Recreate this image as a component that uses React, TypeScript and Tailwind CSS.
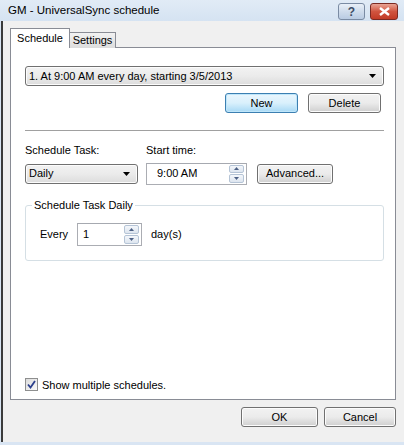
import React from "react";

// Win7-style "schedule" dialog with tab control, combo boxes and spin edits

const font = { fontFamily: '"Liberation Sans", Arial, sans-serif' };

function Button({ label, primary, className = "" }: { label: string; primary?: boolean; className?: string }) {
  return (
    <div
      className={`flex items-center justify-center rounded-[3px] border text-[11px] text-black ${
        primary
          ? "border-[#3c7fb1] bg-gradient-to-b from-[#eaf6fd] via-[#d9f0fc] to-[#a7d9f5] shadow-[inset_0_0_0_1px_#bfe6fa]"
          : "border-[#707070] bg-gradient-to-b from-[#f2f2f2] via-[#ebebeb] to-[#cfcfcf] shadow-[inset_0_0_0_1px_#fcfcfc]"
      } ${className}`}
    >
      {label}
    </div>
  );
}

function Combo({ value, className = "" }: { value: string; className?: string }) {
  return (
    <div
      className={`flex items-center justify-between rounded-[3px] border border-[#707070] bg-gradient-to-b from-[#f2f2f2] via-[#ebebeb] to-[#dcdcdc] pl-[3px] pr-[7px] text-[11px] text-black shadow-[inset_0_0_0_1px_#fcfcfc] ${className}`}
    >
      <span>{value}</span>
      <svg width="7" height="4" viewBox="0 0 7 4">
        <path d="M0 0h7L3.5 4z" fill="#000" />
      </svg>
    </div>
  );
}

function Spinner() {
  return (
    <div className="flex h-full w-[15px] flex-col gap-[1px] py-[1px]">
      {[0, 1].map((i) => (
        <div
          key={i}
          className="flex flex-1 items-center justify-center rounded-[2px] border border-[#b5c4d6] bg-gradient-to-b from-[#f4f7fb] to-[#dde5ef]"
        >
          <svg width="5" height="3" viewBox="0 0 5 3">
            <path d={i === 0 ? "M0 3h5L2.5 0z" : "M0 0h5L2.5 3z"} fill="#4d6185" />
          </svg>
        </div>
      ))}
    </div>
  );
}

function SpinEdit({ value, className = "", textPad = "pl-[10px]" }: { value: string; className?: string; textPad?: string }) {
  return (
    <div
      className={`flex items-center justify-between border border-[#abadb3] border-t-[#a6a9b0] bg-white pr-[2px] text-[11px] text-black ${className}`}
    >
      <span className={textPad}>{value}</span>
      <Spinner />
    </div>
  );
}

export default function App() {
  return (
    <div className="flex h-[445px] w-[404px] flex-col bg-[#d9e5f3]" style={font}>
      {/* title bar */}
      <div className="flex h-[21px] shrink-0 items-center justify-between bg-gradient-to-b from-[#e1ebf6] to-[#d5e3f2] pl-[8px] pr-[6px]">
        <span className="text-[11.5px] text-black">GM - UniversalSync schedule</span>
        <div className="mt-[2px] flex gap-[5px]">
          <div className="flex h-[17px] w-[27px] items-center justify-center rounded-[3px] border border-[#7a8ba3] bg-gradient-to-b from-[#e9f0f8] via-[#cfdcec] to-[#b9cbe2] text-[12px] font-bold text-[#3e4e66]">
            ?
          </div>
          <div className="flex h-[17px] w-[28px] items-center justify-center rounded-[3px] border border-[#7b2a22] bg-gradient-to-b from-[#e8a394] via-[#d0543f] to-[#c23b26]">
            <svg width="11" height="9" viewBox="0 0 11 9">
              <path d="M1 1l9 7M10 1L1 8" stroke="#fff" strokeWidth="2.4" />
            </svg>
          </div>
        </div>
      </div>

      {/* dialog client area */}
      <div className="ml-[1px] mb-[3px] flex flex-1 flex-col border-l-2 border-[#3b3b3b] bg-[#f0f0f0] pl-[7px] pr-[8px] pt-[7px]">
        {/* tabs */}
        <div className="relative z-10 flex h-[20px] items-end">
          <div className="flex h-[20px] w-[60px] items-center justify-center border border-b-0 border-[#898c95] bg-white text-[11px] text-black">
            Schedule
          </div>
          <div className="flex h-[16px] w-[46px] items-center justify-center border border-b-0 border-l-0 border-[#898c95] bg-gradient-to-b from-[#f2f2f2] to-[#dcdcdc] text-[11px] text-black">
            Settings
          </div>
        </div>

        {/* tab page */}
        <div className="-mt-[1px] flex h-[353px] w-[386px] flex-col border border-[#898c95] bg-white px-[14px] pt-[18px]">
          <Combo value="1. At 9:00 AM every day, starting 3/5/2013" className="h-[20px] w-[359px]" />

          <div className="mt-[7px] flex w-[356px] justify-end gap-[10px]">
            <Button label="New" primary className="h-[20px] w-[73px]" />
            <Button label="Delete" className="h-[20px] w-[73px]" />
          </div>

          <div className="mt-[17px] h-px w-[359px] bg-[#a0a0a0]" />

          <div className="mt-[11px] flex text-[11px] text-black">
            <span className="w-[121px]">Schedule Task:</span>
            <span>Start time:</span>
          </div>

          <div className="mt-[4px] flex items-center">
            <Combo value="Daily" className="h-[20px] w-[113px]" />
            <SpinEdit value="9:00 AM" className="ml-[8px] h-[22px] w-[101px]" />
            <Button label="Advanced..." className="ml-[10px] h-[20px] w-[76px]" />
          </div>

          {/* group box */}
          <div className="relative mt-[20px] h-[56px] w-[359px] rounded-[3px] border border-[#d5dfe5]">
            <span className="absolute -top-[8px] left-[6px] bg-white px-[2px] text-[11px] leading-[14px] text-black">
              Schedule Task Daily
            </span>
            <div className="flex items-center pl-[14px] pt-[17px] text-[11px] text-black">
              <span className="w-[37px]">Every</span>
              <SpinEdit value="1" textPad="pl-[5px]" className="h-[23px] w-[65px]" />
              <span className="ml-[9px]">day(s)</span>
            </div>
          </div>

          <div className="mt-auto mb-[6px] flex items-center gap-[4px] text-[11px] text-black">
            <div className="flex h-[13px] w-[13px] items-center justify-center border border-[#8e8f8f] bg-gradient-to-br from-[#dcdcdc] to-[#fafafa]">
              <svg width="9" height="9" viewBox="0 0 9 9">
                <path d="M1 4.5l2.5 3L8 1" stroke="#2b3f8c" strokeWidth="1.8" fill="none" />
              </svg>
            </div>
            <span>Show multiple schedules.</span>
          </div>
        </div>

        {/* dialog buttons */}
        <div className="mt-[7px] flex justify-end gap-[6px]">
          <Button label="OK" className="h-[20px] w-[77px]" />
          <Button label="Cancel" className="h-[20px] w-[72px]" />
        </div>
      </div>
    </div>
  );
}
